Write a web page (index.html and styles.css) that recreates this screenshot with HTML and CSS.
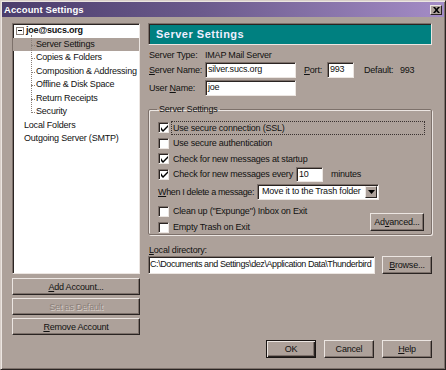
FILE: index.html
```html
<!DOCTYPE html>
<html lang="en">

<head>
  <meta charset="UTF-8">
  <title>Account Settings</title>
  <link rel="stylesheet" href="styles.css">
</head>

<body>
  <div class="window">
    <div class="titlebar">
      <span class="title">Account Settings</span>
      <span class="close">
        <svg width="7" height="6" viewBox="0 0 7 6"><path d="M0 0h2l1.5 1.8L5 0h2L4.5 3 7 6H5L3.5 4.2 2 6H0l2.5-3z" fill="#000"/></svg>
      </span>
    </div>

    <div class="main">
      <div class="leftcol">
        <div class="tree">
          <div class="node root"><span class="expander"></span><b>joe@sucs.org</b></div>
          <div class="children">
            <div class="node child selected"><span>Server Settings</span></div>
            <div class="node child"><span>Copies &amp; Folders</span></div>
            <div class="node child"><span>Composition &amp; Addressing</span></div>
            <div class="node child"><span>Offline &amp; Disk Space</span></div>
            <div class="node child"><span>Return Receipts</span></div>
            <div class="node child"><span>Security</span></div>
          </div>
          <div class="node top">Local Folders</div>
          <div class="node top">Outgoing Server (SMTP)</div>
        </div>
        <button class="btn wide"><u>A</u>dd Account...</button>
        <button class="btn wide disabled">Set as Default</button>
        <button class="btn wide"><u>R</u>emove Account</button>
      </div>

      <div class="rightcol">
        <div class="banner">Server Settings</div>

        <div class="row first">
          <span class="lbl">Server Type:</span>
          <span>IMAP Mail Server</span>
        </div>
        <div class="row">
          <span class="lbl"><u>S</u>erver Name:</span>
          <span class="field name">silver.sucs.org</span>
          <span class="port"><u>P</u>ort:</span>
          <span class="field portbox">993</span>
          <span class="deflbl">Default:</span>
          <span>993</span>
        </div>
        <div class="row">
          <span class="lbl">User <u>N</u>ame:</span>
          <span class="field name">joe</span>
        </div>

        <fieldset class="group">
          <legend>Server Settings</legend>
          <div class="check first focus"><span class="box"><svg width="7" height="7" viewBox="0 0 7 7"><path d="M0 2v3l2 2 5-5V-0L2 5z" fill="#000"/></svg></span><span class="ctext">Use secure connection (SSL)</span></div>
          <div class="check"><span class="box"></span><span class="ctext">Use secure authentication</span></div>
          <div class="check"><span class="box"><svg width="7" height="7" viewBox="0 0 7 7"><path d="M0 2v3l2 2 5-5V-0L2 5z" fill="#000"/></svg></span><span class="ctext">Check for new messages at startup</span></div>
          <div class="check"><span class="box"><svg width="7" height="7" viewBox="0 0 7 7"><path d="M0 2v3l2 2 5-5V-0L2 5z" fill="#000"/></svg></span><span class="ctext">Check for new messages every</span><span class="field mins">10</span><span class="minlbl">minutes</span></div>
          <div class="delrow">
            <span class="dellbl"><u>W</u>hen I delete a message:</span>
            <span class="select"><span class="seltext">Move it to the Trash folder</span><span class="arrow"><svg width="7" height="4" viewBox="0 0 7 4"><path d="M0 0h7L3.5 4z" fill="#000"/></svg></span></span>
          </div>
          <div class="lastrows">
            <div class="checks">
              <div class="check tall"><span class="box"></span><span class="ctext">Clean up ("Expunge") Inbox on Exit</span></div>
              <div class="check tall"><span class="box"></span><span class="ctext">Empty Trash on Exit</span></div>
            </div>
            <button class="btn adv">Ad<u>v</u>anced...</button>
          </div>
        </fieldset>

        <div class="dirlbl"><u>L</u>ocal directory:</div>
        <div class="dirrow">
          <span class="field dir">C:\Documents and Settings\dez\Application Data\Thunderbird</span>
          <button class="btn browse"><u>B</u>rowse...</button>
        </div>
      </div>
    </div>

    <div class="footer">
      <button class="btn dlg default">OK</button>
      <button class="btn dlg">Cancel</button>
      <button class="btn dlg"><u>H</u>elp</button>
    </div>
  </div>
</body>

</html>
```

FILE: styles.css
```css
* {
  margin: 0;
  padding: 0;
  box-sizing: border-box;
}

body {
  font-family: "Liberation Sans", Arial, sans-serif;
  font-size: 9px;
  letter-spacing: -0.2px;
  color: #111;
  background: #ada19a;
}

u {
  text-decoration: underline;
}

.window {
  width: 446px;
  height: 370px;
  background-color: #ada19a;
  border: 1px solid;
  border-color: #d8cfc9 #2a2422 #2a2422 #d8cfc9;
  box-shadow: inset 1px 1px 0 #ece6e2, inset -1px -1px 0 #7d716b;
  padding: 1px;
  display: flex;
  flex-direction: column;
}

.titlebar {
  height: 15px;
  background: linear-gradient(to right, #4b3d6c, #6b5a8c 45%, #a48cc6);
  display: flex;
  align-items: center;
  justify-content: space-between;
  padding: 0 2px 0 2px;
}

.title {
  color: #fff;
  font-weight: bold;
  font-size: 9.5px;
  letter-spacing: 0.1px;
}

.close {
  width: 12px;
  height: 10px;
  background: #ada19a;
  border: 1px solid;
  border-color: #ece6e2 #2a2422 #2a2422 #ece6e2;
  display: flex;
  align-items: center;
  justify-content: center;
}

.main {
  display: flex;
  padding: 6px 12px 0 10px;
  gap: 8px;
}

.leftcol {
  width: 128px;
  display: flex;
  flex-direction: column;
}

.tree {
  height: 251px;
  background: #fff;
  border: 1px solid;
  border-color: #7d716b #ece6e2 #ece6e2 #7d716b;
  box-shadow: inset 1px 1px 0 #2a2422;
  padding: 0 0 0 2px;
  margin-bottom: 1px;
}

.node {
  height: 13.5px;
  line-height: 13.5px;
  white-space: nowrap;
}

.root {
  display: flex;
  align-items: center;
  padding-left: 1px;
}

.expander {
  width: 8px;
  height: 8px;
  border: 1px solid #8a807a;
  margin-right: 2px;
  position: relative;
}

.expander::after {
  content: "";
  position: absolute;
  left: 1px;
  top: 2px;
  width: 4px;
  border-top: 1px solid #000;
}

.children {
  margin-left: 16px;
  position: relative;
}

.children::before {
  content: "";
  position: absolute;
  left: 0;
  top: -3px;
  height: 78px;
  border-left: 1px dotted #8a807a;
}

.child span {
  padding-left: 5px;
  position: relative;
}

.child span::before {
  content: "";
  position: absolute;
  left: 0;
  top: 6px;
  width: 4px;
  border-top: 1px dotted #8a807a;
}

.selected {
  background: #ada19a;
  margin-left: -18px;
  padding-left: 18px;
}

.top {
  padding-left: 9px;
}

.btn {
  font-family: inherit;
  font-size: 9px;
  letter-spacing: -0.2px;
  color: #111;
  background: #ada19a;
  border: 1px solid;
  border-color: #ece6e2 #2a2422 #2a2422 #ece6e2;
  box-shadow: inset -1px -1px 0 #7d716b;
  height: 17px;
  line-height: 14px;
  text-align: center;
}

.wide {
  width: 128px;
  margin-top: 3px;
}

.disabled {
  color: #8a7f79;
  text-shadow: 1px 1px 0 #d8cfc9;
}

.rightcol {
  width: 284px;
  display: flex;
  flex-direction: column;
}

.banner {
  height: 22px;
  background: #008080;
  border: 1px solid;
  border-color: #7d716b #ece6e2 #ece6e2 #7d716b;
  box-shadow: inset 1px 1px 0 #2a2422;
  color: #eef;
  font-weight: bold;
  font-size: 11px;
  letter-spacing: 0.5px;
  line-height: 20px;
  padding-left: 7px;
}

.row {
  display: flex;
  align-items: center;
  height: 16px;
  margin-top: 2px;
}

.row.first {
  margin-top: 3px;
  height: 14px;
}

.row.first + .row {
  margin-top: 0;
}

.lbl {
  width: 57px;
  padding-left: 1px;
}

.field {
  background: #fff;
  border: 1px solid;
  border-color: #7d716b #ece6e2 #ece6e2 #7d716b;
  box-shadow: inset 1px 1px 0 #2a2422;
  height: 16px;
  line-height: 13px;
  padding-left: 2px;
  white-space: nowrap;
  overflow: hidden;
}

.name {
  width: 91px;
}

.port {
  margin-left: 8px;
  width: 23px;
}

.portbox {
  width: 27px;
}

.deflbl {
  margin-left: 10px;
  width: 36px;
}

.group {
  margin-top: 7px;
  height: 132px;
  border: 1px solid #7d716b;
  box-shadow: 1px 1px 0 #ece6e2, inset 1px 1px 0 #ece6e2;
  border-radius: 2px;
  padding: 0 7px 0 9px;
}

legend {
  padding: 0 2px;
  margin-left: -1px;
  line-height: 12px;
}

.check {
  display: flex;
  align-items: center;
  height: 15.5px;
  white-space: nowrap;
}

.check.first {
  margin-top: 5px;
}

.check.tall {
  height: 16px;
}

.box {
  width: 11px;
  height: 11px;
  background: #fff;
  border: 1px solid;
  border-color: #7d716b #ece6e2 #ece6e2 #7d716b;
  box-shadow: inset 1px 1px 0 #2a2422;
  margin-right: 4px;
  display: flex;
  align-items: center;
  justify-content: center;
  padding: 1px 0 0 1px;
}

.focus .ctext {
  outline: 1px dotted #3a3230;
  outline-offset: 0;
  width: 252px;
  line-height: 12px;
  padding-left: 1px;
  margin-left: -1px;
}

.mins {
  width: 27px;
  height: 15px;
  margin-left: 3px;
}

.minlbl {
  margin-left: 8px;
}

.delrow {
  display: flex;
  align-items: center;
  height: 18px;
  margin-top: 1px;
}

.dellbl {
  width: 99px;
  white-space: nowrap;
  letter-spacing: -0.35px;
}

.select {
  display: flex;
  width: 122px;
  height: 16px;
  background: #fff;
  border: 1px solid;
  border-color: #7d716b #ece6e2 #ece6e2 #7d716b;
  box-shadow: inset 1px 1px 0 #2a2422;
}

.seltext {
  flex: 1;
  line-height: 13px;
  padding-left: 4px;
  white-space: nowrap;
}

.arrow {
  width: 12px;
  height: 12px;
  margin: 1px 1px 0 0;
  background: #ada19a;
  border: 1px solid;
  border-color: #ece6e2 #2a2422 #2a2422 #ece6e2;
  display: flex;
  align-items: center;
  justify-content: center;
}

.lastrows {
  display: flex;
  justify-content: space-between;
}

.checks {
  padding-top: 2px;
}

.adv {
  width: 54px;
  height: 18px;
  margin-top: 12px;
}

.dirlbl {
  margin-top: 10px;
  padding-left: 1px;
}

.dirrow {
  display: flex;
  justify-content: space-between;
  margin-top: 1px;
}

.dir {
  width: 227px;
  height: 18px;
  line-height: 15px;
  letter-spacing: -0.42px;
  padding-left: 1px;
}

.browse {
  width: 50px;
  height: 18px;
}

.footer {
  display: flex;
  justify-content: flex-end;
  gap: 8px;
  margin-top: auto;
  padding: 0 12px 10px 0;
}

.dlg {
  width: 50px;
  height: 18px;
}

.default {
  border: 1px solid #1a1614;
  box-shadow: inset 1px 1px 0 #ece6e2, inset -1px -1px 0 #2a2422, inset -2px -2px 0 #7d716b;
}
```
